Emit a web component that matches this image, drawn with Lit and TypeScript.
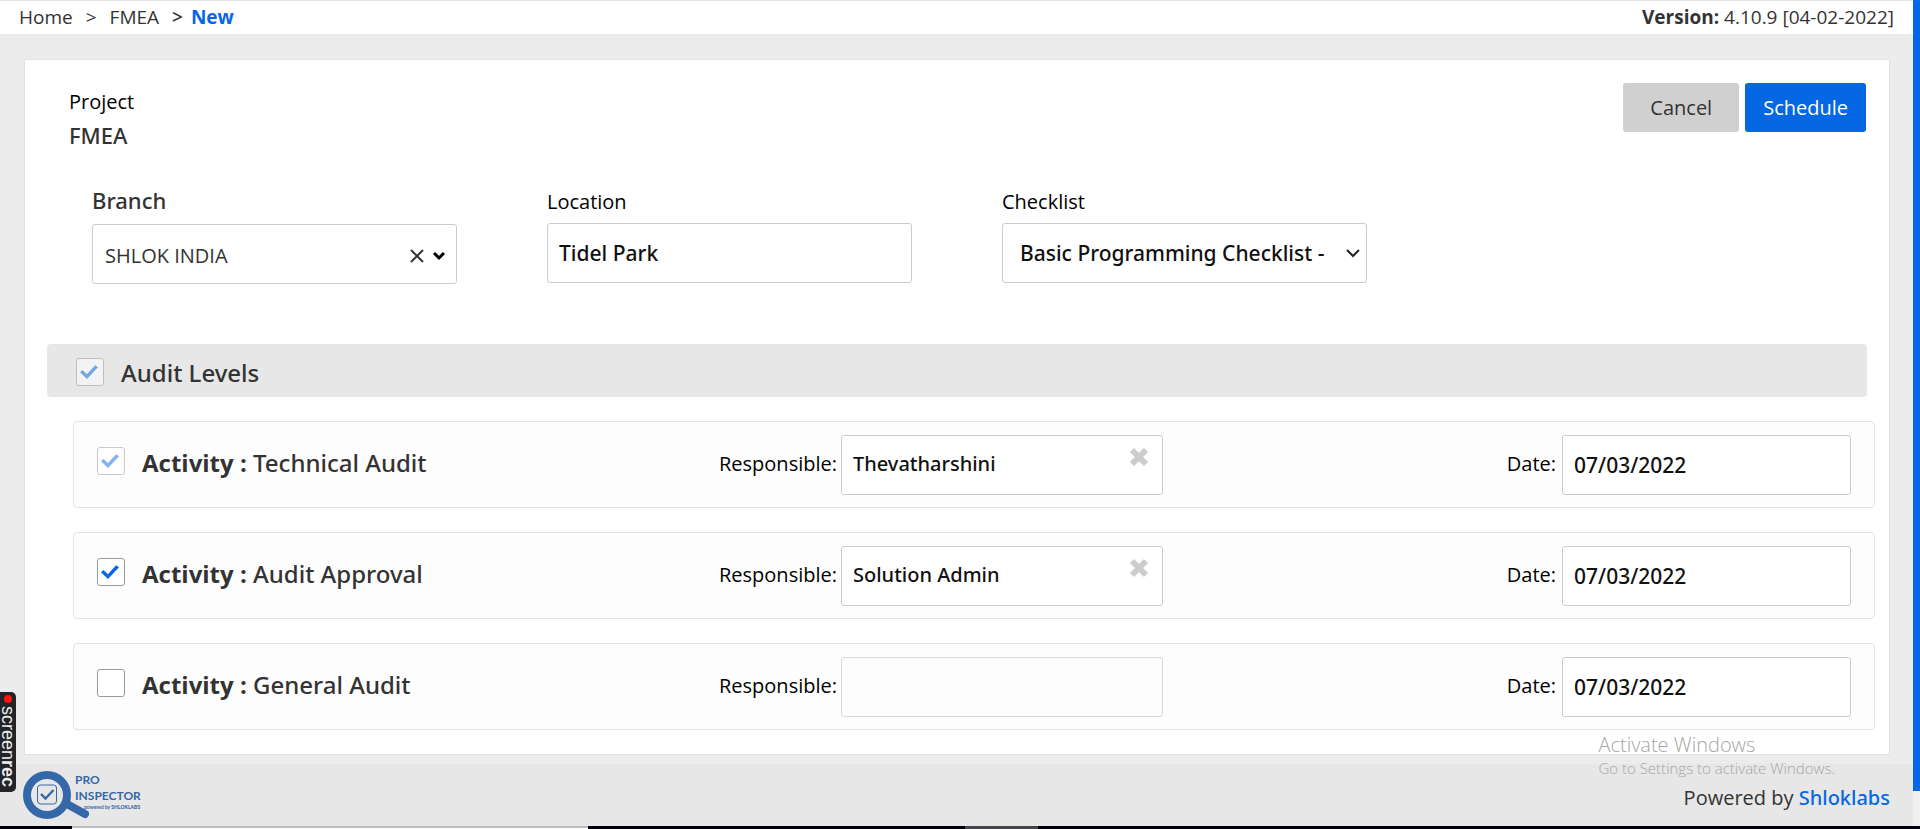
import { LitElement, html, css, svg, nothing } from "lit";
import { customElement, property, state } from "lit/decorators.js";

interface Activity {
  id: string;
  name: string;
  responsible: string;
  date: string;
  checked: boolean;
  locked: boolean;
}

const checkbox = css`
  .tick {
    appearance: none;
    box-sizing: border-box;
    flex: none;
    display: grid;
    place-items: center;
    width: 28px;
    height: 28px;
    margin: 0;
    padding: 0 2px 0 0;
    border: 1px solid #999;
    border-radius: 3px;
    background: #fff;
  }
  .tick:checked::before {
    content: "";
    width: 18px;
    height: 14px;
    background: #0567e4;
    clip-path: polygon(0 52%, 14% 36%, 38% 66%, 84% 2%, 100% 16%, 39% 100%);
  }
  .tick:disabled {
    opacity: 0.5;
  }
`;

const field = css`
  .box {
    box-sizing: border-box;
    width: 100%;
    height: 60px;
    border: 1px solid #ccc;
    border-radius: 3px;
    background: #fff;
    color: #111;
    font: 500 21px/28px "Noto Sans", sans-serif;
    padding: 0 11px;
    margin: 0;
  }
  .box:disabled {
    opacity: 0.75;
    background: transparent;
  }
`;

@customElement("activity-row")
export class ActivityRow extends LitElement {
  @property({ attribute: false }) activity!: Activity;

  static styles = [
    checkbox,
    field,
    css`
      :host {
        display: block;
      }
      .row {
        display: grid;
        grid-template-columns: 622fr 444fr 688fr;
        align-items: center;
        padding: 13px 23px 12px;
        border: 1px solid #e4e4e4;
        border-radius: 4px;
        background: #fdfdfd;
      }
      .name {
        display: flex;
        align-items: center;
        gap: 17px;
        padding-bottom: 8px;
        font: 500 24px/32px "Noto Sans", sans-serif;
        color: #333;
      }
      .title {
        padding-top: 4px;
      }
      .title b {
        font-family: "Open Sans", sans-serif;
        font-weight: 700;
      }
      .pair {
        display: flex;
        align-items: center;
        gap: 4px;
        color: #000;
      }
      .right {
        justify-content: flex-end;
        gap: 6px;
      }
      .label {
        flex: none;
        padding-bottom: 2px;
      }
      .person {
        position: relative;
        flex: 1;
      }
      .date {
        width: 42%;
      }
      .person .box {
        padding-bottom: 4px;
        font-size: 20px;
      }
      .clear {
        position: absolute;
        top: 12px;
        right: 14px;
        width: 20px;
        height: 20px;
        padding: 0;
        border: 0;
        background: none;
      }
      .clear svg {
        display: block;
      }
    `,
  ];

  render() {
    const a = this.activity;
    return html`
      <div class="row">
        <div class="name">
          <input class="tick" type="checkbox" id="on" .checked=${a.checked} ?disabled=${a.locked} />
          <label class="title" for="on"><b>Activity :</b> ${a.name}</label>
        </div>
        <div class="pair">
          <label class="label" for="person">Responsible:</label>
          <div class="person">
            <input class="box" id="person" type="text" .value=${a.responsible} ?disabled=${!a.checked} />
            ${a.responsible
              ? html`<button class="clear" type="button" aria-label="Clear responsible">
                  <svg width="20" height="20" viewBox="0 0 20 20">
                    <path d="M3 3 17 17M17 3 3 17" stroke="#ccc" stroke-width="6" />
                  </svg>
                </button>`
              : nothing}
          </div>
        </div>
        <div class="pair right">
          <label class="label" for="date">Date:</label>
          <div class="date">
            <input class="box" id="date" type="text" .value=${a.date} />
          </div>
        </div>
      </div>
    `;
  }
}

@customElement("app-root")
export class AppRoot extends LitElement {
  @state() private activities: Activity[] = [
    { id: "technical", name: "Technical Audit", responsible: "Thevatharshini", date: "07/03/2022", checked: true, locked: true },
    { id: "approval", name: "Audit Approval", responsible: "Solution Admin", date: "07/03/2022", checked: true, locked: false },
    { id: "general", name: "General Audit", responsible: "", date: "07/03/2022", checked: false, locked: false },
  ];

  static styles = [
    checkbox,
    field,
    css`
      :host {
        display: flex;
        flex-direction: column;
        min-height: 100vh;
        font: 400 20px/28px "Open Sans", sans-serif;
        color: #333;
        background: #ececec;
      }
      a {
        color: inherit;
        text-decoration: none;
      }
      .window {
        flex: 1;
        display: flex;
      }
      .page {
        flex: 1;
        min-width: 0;
        display: flex;
        flex-direction: column;
      }
      .track {
        flex: none;
        width: 7px;
        padding-bottom: 35px;
        background: #f0f0f0;
        display: flex;
      }
      .thumb {
        flex: 1;
        background: #0567e4;
      }
      .top {
        display: flex;
        justify-content: space-between;
        align-items: center;
        box-sizing: border-box;
        height: 34px;
        padding: 0 19px 2px;
        border-top: 1px solid #e4e4e4;
        background: #fff;
        font-size: 19px;
      }
      .crumbs {
        display: flex;
        gap: 13px;
      }
      .here {
        font-weight: 600;
        display: flex;
        gap: 8px;
      }
      .here .link {
        font: inherit;
        font-weight: 700;
      }
      .link {
        color: #0567e4;
        font-family: "Noto Sans", sans-serif;
        font-weight: 500;
      }
      .main {
        flex: 1;
        padding: 25px 23px 8px 24px;
      }
      .card {
        padding: 23px 14px 24px 22px;
        border: 1px solid #e2e2e2;
        background: #fff;
      }
      .head {
        display: flex;
        justify-content: space-between;
        align-items: flex-start;
        padding: 0 9px 0 22px;
      }
      .project {
        padding-top: 5px;
        color: #000;
      }
      .strong {
        padding-top: 5px;
        font: 500 22px/28px "Noto Sans", sans-serif;
        color: #333;
      }
      .buttons {
        display: flex;
        gap: 6px;
      }
      .button {
        height: 49px;
        padding: 0 18px;
        border: 0;
        border-radius: 3px;
        background: #0567e4;
        color: #fff;
        font: 400 20px/28px "Open Sans", sans-serif;
      }
      .plain {
        padding: 0 27px;
        background: #d0d0d0;
        color: #333;
      }
      .fields {
        display: grid;
        grid-template-columns: repeat(4, 1fr);
        margin: 39px 8px 60px 0;
      }
      .cell {
        padding: 0 45px;
        color: #000;
      }
      .cell label {
        display: block;
        padding-bottom: 7px;
      }
      .cell .big {
        padding-bottom: 12px;
        font: 500 22px/24px "Noto Sans", sans-serif;
        color: #333;
      }
      .combo {
        position: relative;
      }
      select.box {
        appearance: none;
        display: block;
        padding: 0 32px 0 17px;
      }
      .combo .quiet {
        padding-left: 12px;
        padding-top: 4px;
        font: 400 20px/28px "Open Sans", sans-serif;
        color: #333;
      }
      .marks {
        position: absolute;
        top: 0;
        right: 7px;
        height: 60px;
        display: flex;
        align-items: center;
        gap: 8px;
        pointer-events: none;
      }
      .wide {
        right: 11px;
        height: 64px;
      }
      .wipe {
        padding: 0;
        border: 0;
        background: none;
        height: 14px;
      }
      .marks svg {
        display: block;
      }
      .level {
        display: flex;
        align-items: center;
        gap: 17px;
        box-sizing: border-box;
        height: 53px;
        margin: 0 8px 24px 0;
        padding: 3px 29px 0;
        border-radius: 4px;
        background: #e7e7e7;
        font: 500 24px/32px "Noto Sans", sans-serif;
      }
      .level label {
        padding-top: 2px;
      }
      .rows {
        display: grid;
        gap: 24px;
        padding-left: 26px;
      }
      .foot {
        display: flex;
        justify-content: space-between;
        align-items: center;
        height: 62px;
        padding: 0 23px;
        background: #e7e7e7;
      }
      .foot svg {
        display: block;
      }
      .powered {
        padding-top: 6px;
      }
      .taskbar {
        display: flex;
        height: 3px;
        background: #00000c;
      }
      .task {
        box-sizing: border-box;
        width: 516px;
        margin-left: 72px;
        border-top: 2px solid #bdbdbd;
        background: #fff;
      }
      .dim {
        width: 73px;
        margin-left: 377px;
        background: #45464c;
      }
      .recorder {
        position: absolute;
        left: 0;
        bottom: 37px;
        display: flex;
        flex-direction: column;
        align-items: center;
        gap: 3px;
        box-sizing: border-box;
        width: 16px;
        height: 100px;
        padding-top: 3px;
        border-radius: 0 5px 5px 0;
        background: #222428;
        color: #eee;
        font: 400 18px/16px "Liberation Sans", sans-serif;
      }
      .dot {
        flex: none;
        width: 8px;
        height: 8px;
        border-radius: 50%;
        background: #f11;
      }
      .rec {
        writing-mode: vertical-rl;
      }
      .notice {
        position: absolute;
        right: 85px;
        bottom: 51px;
        color: #a6a6a6;
        font: 300 15px/20px "Open Sans", sans-serif;
        pointer-events: none;
      }
      .notice-title {
        font-size: 20px;
        line-height: 26px;
      }
    `,
  ];

  private logo() {
    return html`
      <svg width="122" height="50" viewBox="0 -1 122 50" role="img" aria-label="Pro Inspector">
        <path d="M44 33 62 43" stroke="#3568a8" stroke-width="8" stroke-linecap="round" />
        <circle cx="24" cy="24" r="20" fill="none" stroke="#3568a8" stroke-width="8" />
        <rect x="14.500" y="14" width="19" height="19" rx="3" fill="none" stroke="#3568a8" />
        <path d="M18 23 22.500 27.500 30.500 19" fill="none" stroke="#3568a8" stroke-width="2.400" />
        <g fill="#3568a8" font-family="Lato" font-weight="700">
          <text x="52" y="13" font-size="12">PRO</text>
          <text x="52" y="29" font-size="12">INSPECTOR</text>
          <text x="61" y="38" font-size="5">powered by <tspan font-weight="900">SHLOKLABS</tspan></text>
        </g>
      </svg>`;
  }

  render() {
    return html`
      <div class="window">
        <div class="page">
          <header class="top">
            <nav class="crumbs">
              <a href="#home">Home</a><span>&gt;</span><a href="#fmea">FMEA</a>
              <span class="here"><span>&gt;</span><a class="link" href="#new">New</a></span>
            </nav>
            <div><b>Version:</b> 4.10.9 [04-02-2022]</div>
          </header>

          <main class="main">
            <form class="card">
              <div class="head">
                <div class="project">
                  <div>Project</div>
                  <div class="strong">FMEA</div>
                </div>
                <div class="buttons">
                  <button class="button plain" type="button">Cancel</button>
                  <button class="button" type="button">Schedule</button>
                </div>
              </div>

              <div class="fields">
                <div class="cell">
                  <label class="big" for="branch">Branch</label>
                  <div class="combo">
                    <select class="box quiet" id="branch">
                      <option>SHLOK INDIA</option>
                    </select>
                    <div class="marks wide">
                      <button class="wipe" type="button" aria-label="Clear branch">
                        <svg width="14" height="14" viewBox="0 0 14 14">
                          <path d="M1 1 13 13M13 1 1 13" stroke="#333" stroke-width="2" />
                        </svg>
                      </button>
                      <svg width="14" height="10" viewBox="0 0 14 10">
                        <path d="M2 2 7 7 12 2" fill="none" stroke="#000" stroke-width="3" />
                      </svg>
                    </div>
                  </div>
                </div>
                <div class="cell">
                  <label for="location">Location</label>
                  <input class="box" id="location" type="text" .value=${"Tidel Park"} />
                </div>
                <div class="cell">
                  <label for="checklist">Checklist</label>
                  <div class="combo">
                    <select class="box" id="checklist">
                      <option>Basic Programming Checklist -</option>
                    </select>
                    <div class="marks">
                      <svg width="14" height="10" viewBox="0 0 14 10">
                        <path d="M1 2 7 8 13 2" fill="none" stroke="#222" stroke-width="2" />
                      </svg>
                    </div>
                  </div>
                </div>
              </div>

              <div class="level">
                <input class="tick" type="checkbox" id="levels" checked disabled />
                <label for="levels">Audit Levels</label>
              </div>

              <div class="rows">
                ${this.activities.map((a) => html`<activity-row .activity=${a}></activity-row>`)}
              </div>
            </form>
          </main>

          <footer class="foot">
            ${this.logo()}
            <div class="powered">Powered by <a class="link" href="#shloklabs">Shloklabs</a></div>
          </footer>
        </div>
        <div class="track"><div class="thumb"></div></div>
      </div>
      <div class="taskbar">
        <div class="task"></div>
        <div class="dim"></div>
      </div>
      <div class="recorder">
        <span class="dot"></span>
        <span class="rec">screen<b>rec</b></span>
      </div>
      <div class="notice">
        <div class="notice-title">Activate Windows</div>
        <div>Go to Settings to activate Windows.</div>
      </div>
    `;
  }
}
